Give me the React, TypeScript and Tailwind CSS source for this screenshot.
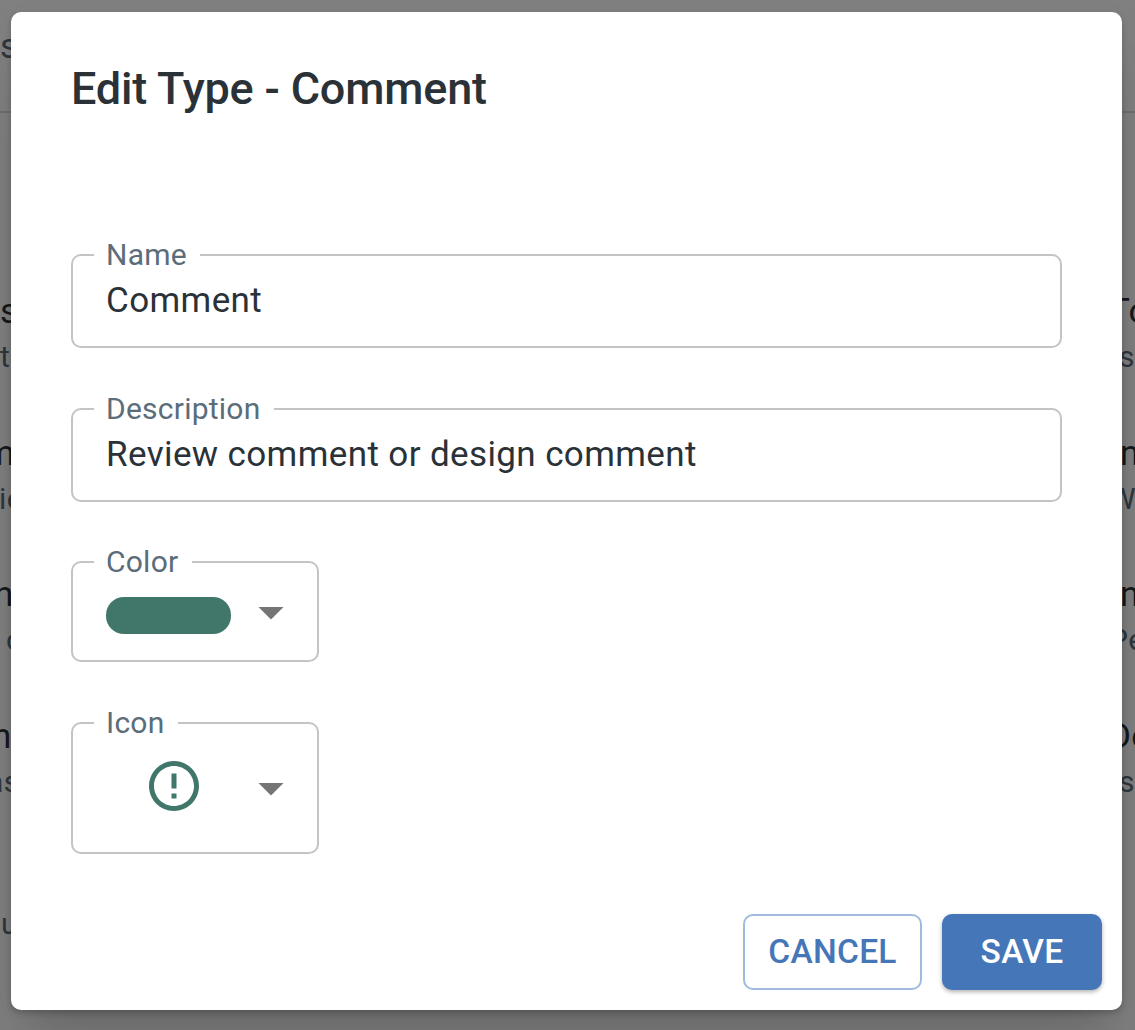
import type { ReactNode } from "react";

type Line = { title: string; sub: string; titleClass: string; subClass: string };

const leftRows: Line[] = [
  { title: "s", sub: "t", titleClass: "ml-[0px]", subClass: "ml-[0px]" },
  { title: "m", sub: "ie", titleClass: "-ml-[16px]", subClass: "-ml-[1px]" },
  { title: "n", sub: "c", titleClass: "-ml-[6px]", subClass: "ml-[6px]" },
  { title: "n", sub: "as", titleClass: "-ml-[8px]", subClass: "-ml-[13px]" },
];

const rightRows: Line[] = [
  { title: "To", sub: "s", titleClass: "-ml-[13px]", subClass: "-ml-[3px]" },
  { title: "n", sub: "W", titleClass: "-ml-[2px]", subClass: "-ml-[13px]" },
  { title: "n", sub: "Pe", titleClass: "-ml-[2px]", subClass: "-ml-[13px]" },
  { title: "De", sub: "s", titleClass: "-ml-[14px]", subClass: "-ml-[3px]" },
];

function Column({ rows, header, footer }: { rows: Line[]; header: string; footer: string }) {
  return (
    <div className="w-[13px] overflow-hidden whitespace-nowrap tracking-[0.4px]">
      <div className="h-[113px] border-b-2 border-[#707070] pt-[24px] text-[35px] leading-[46px] text-[#2e373d]">
        {header}
      </div>
      <div className="mt-[176px] flex flex-col gap-[49.7px]">
        {rows.map((r, i) => (
          <div key={i}>
            <div className={`text-[35px] leading-[46px] text-[#15191c] ${r.titleClass}`}>{r.title}</div>
            <div className={`-mt-px mb-px text-[30px] leading-[46px] text-[#2e373d] ${r.subClass}`}>{r.sub}</div>
          </div>
        ))}
      </div>
      <div className="mt-[95px] ml-[1px] text-[30px] leading-[46px] text-[#2e373d]">{footer}</div>
    </div>
  );
}

function Field({ label, className, children }: { label: string; className: string; children: ReactNode }) {
  return (
    <fieldset className={`rounded-[10px] border-2 border-[#c4c4c4] ${className}`}>
      <legend className="ml-[21px] h-[40px] pr-[13.5px] pl-[12px] text-[30px] leading-[40px] tracking-[0.24px] text-[#5b6d7a]">
        {label}
      </legend>
      {children}
    </fieldset>
  );
}

function Arrow({ className }: { className: string }) {
  return (
    <svg viewBox="0 0 24 24" className={`size-[60px] shrink-0 fill-[#757575] ${className}`}>
      <path d="M7 10l5 5 5-5z" />
    </svg>
  );
}

export default function App() {
  return (
    <div className="relative h-[1030px] w-[1135px] overflow-hidden bg-[#808080] font-[Roboto,sans-serif]">
      <div className="absolute inset-0 flex justify-between">
        <Column rows={leftRows} header="s" footer="u" />
        <Column rows={rightRows} header="" footer="" />
      </div>
      <div className="relative mt-[12px] ml-[11px] flex h-[998px] w-[1111px] flex-col rounded-[10px] bg-white px-[60px] shadow-[0_27px_37px_-17px_rgba(0,0,0,0.18),0_60px_95px_7px_rgba(0,0,0,0.07),0_3px_6px_0px_rgba(0,0,0,0.2)]">
        <h1 className="mt-[50px] h-[53px] text-[45px] leading-[53px] font-medium tracking-[-0.18px] text-[#2a3238]">
          Edit Type - Comment
        </h1>
        <Field label="Name" className="mt-[120px] h-[113px]">
          <div className="pt-px pl-[33px] text-[35px] leading-[50px] tracking-[0.38px] text-[#2a3238]">Comment</div>
        </Field>
        <Field label="Description" className="mt-[41px] h-[113px]">
          <div className="pt-px pl-[33px] text-[35px] leading-[50px] tracking-[0.38px] text-[#2a3238]">
            Review comment or design comment
          </div>
        </Field>
        <Field label="Color" className="mt-[40px] h-[120px] w-[248px]">
          <div className="flex pl-[33px]">
            <div className="mt-[15px] h-[37px] w-[125px] rounded-[18px] bg-[#40776a]" />
            <Arrow className="ml-[10px]" />
          </div>
        </Field>
        <Field label="Icon" className="mt-[41px] h-[151px] w-[248px]">
          <div className="flex pl-[71px]">
            <svg viewBox="0 0 24 24" className="mt-[13px] size-[60px] shrink-0 fill-[#40776a]">
              <path d="M11 15h2v2h-2zm0-8h2v6h-2zm.99-5C6.47 2 2 6.48 2 12s4.47 10 9.99 10C17.52 22 22 17.52 22 12S17.52 2 11.99 2zM12 20c-4.42 0-8-3.58-8-8s3.58-8 8-8 8 3.58 8 8-3.58 8-8 8z" />
            </svg>
            <Arrow className="mt-[15px] ml-[37px]" />
          </div>
        </Field>
        <div className="mt-[60px] -mr-[40px] flex justify-end gap-[20px] text-[33.5px] font-medium tracking-[0.3px]">
          <button className="h-[76px] w-[179px] rounded-[10px] border-2 border-[#a0bbde] text-[#4576b8]">CANCEL</button>
          <button className="h-[76px] w-[160px] rounded-[10px] bg-[#4576b8] text-white shadow-[0_2px_4px_rgba(0,0,0,0.3)]">
            SAVE
          </button>
        </div>
      </div>
    </div>
  );
}
